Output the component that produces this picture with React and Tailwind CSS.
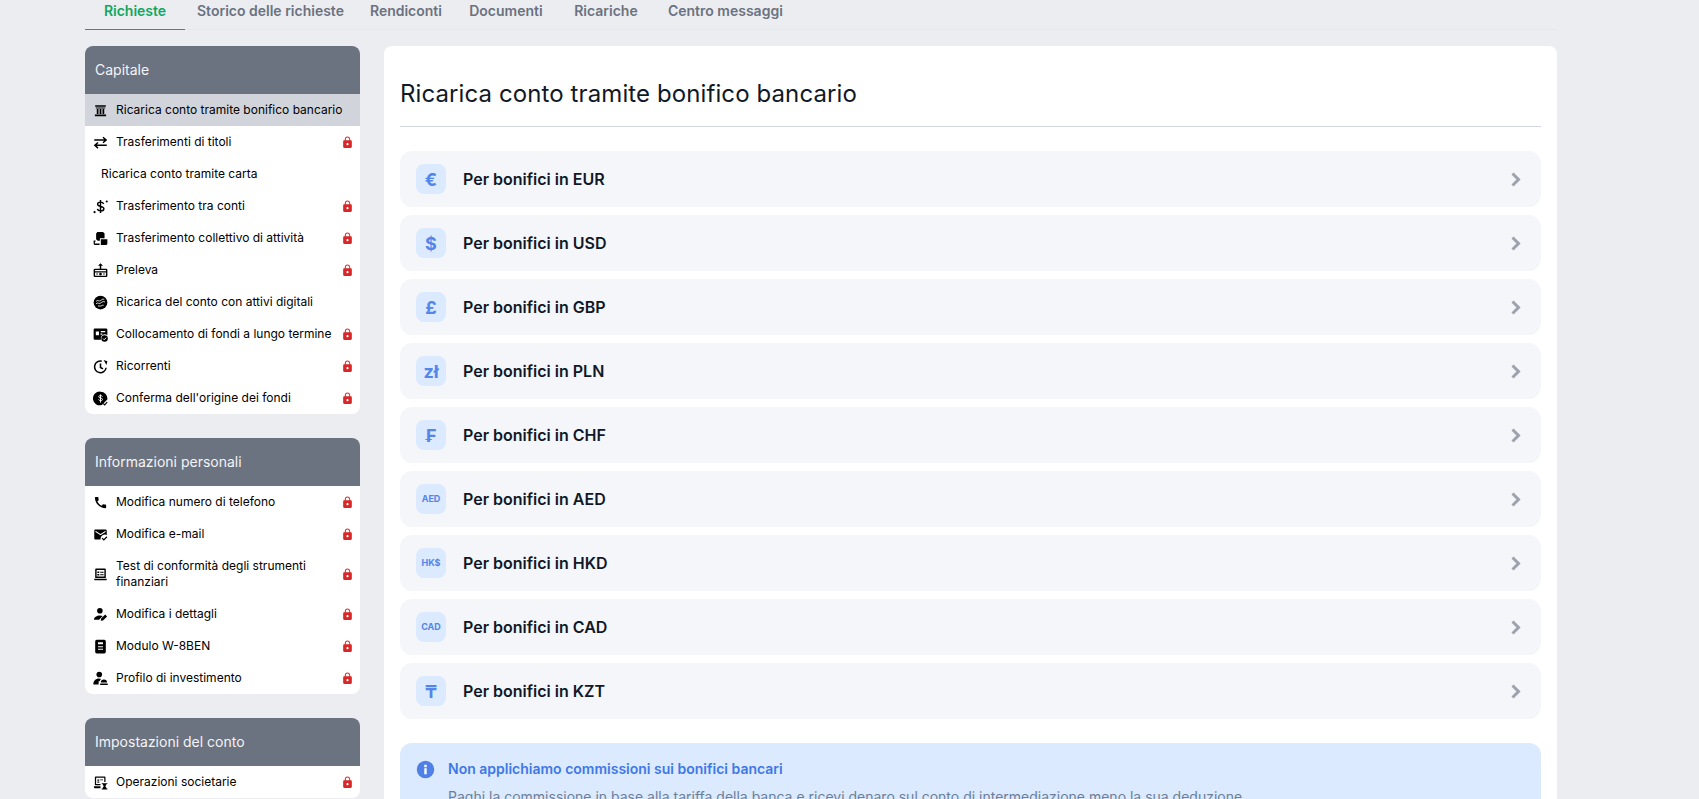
import React from "react";
import { MdCall, MdMarkEmailRead, MdLock } from "react-icons/md";

const S = ({ children }) => (
  <svg viewBox="0 0 24 24" width="15" height="15" fill="currentColor" className="shrink-0">{children}</svg>
);
const Bank = () => (
  <S><path d="M3.500 3.500h17V6h-17zM4.500 7h15v1.600h-15zM6 9.500h2.800v8H6zM10.600 9.500h2.800v8h-2.800zM15.200 9.500H18v8h-2.800zM3 18.500h18V21H3z" /></S>
);
const Swap = () => (
  <S><path d="M2 8h18M16 3.500 21 8l-5 4.500M22 16.500H4M8 12 3 16.500 8 21" fill="none" stroke="currentColor" strokeWidth="2.400" /></S>
);
const Dollar = () => (
  <S>
    <path d="M17 8c-.6-2-2.600-3-5-3-2.700 0-4.600 1.300-4.600 3.300 0 4.700 10 2.400 10 7.200 0 2.200-2.100 3.500-5 3.500-2.600 0-4.800-1.100-5.400-3.200M12 1.500v21" fill="none" stroke="currentColor" strokeWidth="2.300" />
    <circle cx="22" cy="4" r="1.700" /><circle cx="2.500" cy="21" r="1.700" />
  </S>
);
const Collect = () => (
  <S><path d="M7 1.500h9l2.500 2.500v7.500H11v4H7.500L5 13V4zM12.500 13H23v7a2.500 2.500 0 0 1-2.500 2.500h-8zM1 15h3v2H3v3h7.500v2.500H3.500a2.500 2.500 0 0 1-2.500-2.500z" /></S>
);
const Withdraw = () => (
  <S>
    <path d="M12 .5 16 4.500h-2.800V9H21a2 2 0 0 1 2 2v9.500a2 2 0 0 1-2 2H3a2 2 0 0 1-2-2V11a2 2 0 0 1 2-2h7.800V4.500H8zM3.300 11.300v1.700h17.400v-1.700zM3.300 15v5.200h17.400V15z" fillRule="evenodd" />
    <circle cx="12" cy="17.600" r="2.200" /><circle cx="6.500" cy="17.600" r="1.200" /><circle cx="17.500" cy="17.600" r="1.200" />
  </S>
);
const Digital = () => (
  <S>
    <circle cx="12" cy="12" r="11" />
    <path d="M5 10c3-3 4 1 7-1s3-3 6-2M5 14c3-3 4 1 7-1s4-3 7-2M8 18c2-1.500 3 .5 5-.500s2-1.500 4-1" fill="none" stroke="#fff" strokeWidth="1.400" />
  </S>
);
const LongTerm = () => (
  <S>
    <path d="M3 2.500h18a2 2 0 0 1 2 2v8.500a6.500 6.500 0 0 0-10 7.500H3a2 2 0 0 1-2-2v-14a2 2 0 0 1 2-2z" />
    <path d="M4.500 7h5v6h-5zM12.500 6.500h7v2h-7zM12 10.500h3v2h-3z" fill="#fff" />
    <circle cx="18.500" cy="18.500" r="5.200" />
    <path d="m16 18.500 2 2 3-3.500" fill="none" stroke="#fff" strokeWidth="1.500" />
  </S>
);
const Recurring = () => (
  <S>
    <path d="M21 14a9.300 9.300 0 1 1-7-10.500M12 7v6.500l4 2.300" fill="none" stroke="currentColor" strokeWidth="2.500" />
    <path d="m17 1.500 6 2-1.500 6z" />
  </S>
);
const Confirm = () => (
  <S>
    <path d="M12 1a11 11 0 0 1 10.900 12.500L15 21.500l-1 1A11 11 0 1 1 12 1z" />
    <path d="M15 9c-.4-1.300-1.600-1.800-3-1.800-1.600 0-2.800.7-2.800 2 0 2.900 6 1.300 6 4.200 0 1.300-1.300 2-3 2-1.500 0-2.800-.6-3.200-1.900M12 5.500v13" fill="none" stroke="#fff" strokeWidth="1.500" />
    <path d="m16.500 20 2.200 2.200 4-4.500" fill="none" stroke="currentColor" strokeWidth="1.800" />
  </S>
);
const Phone = () => <MdCall size={15} className="shrink-0" />;
const Mail = () => <MdMarkEmailRead size={15} className="shrink-0" />;
const Test = () => (
  <S>
    <path d="M5 2.500h14A1.500 1.500 0 0 1 20.500 4v13.500h-17V4A1.500 1.500 0 0 1 5 2.500zM5.800 4.800v10.400h12.400V4.800zM2 18.800h20v1a1.500 1.500 0 0 1-1.500 1.500h-17A1.500 1.500 0 0 1 2 19.800z" fillRule="evenodd" />
    <path d="M7 7h3v2.500H7zM7 11h3v2.500H7zM11.500 7.500h5.500V9h-5.500zM11.500 11.500h5.500V13h-5.500z" />
  </S>
);
const PersonEdit = () => (
  <S>
    <circle cx="11" cy="6" r="4.500" />
    <path d="M1.500 20.500c0-4.500 4.500-7 9.500-7 1.500 0 3.200.3 4.500.8L9.700 20.500zM12.500 22l.5-3.500 6.500-6.500 3 3-6.500 6.500z" />
  </S>
);
const Doc = () => (
  <S>
    <path d="M6 1h12a2.500 2.500 0 0 1 2.500 2.500v17A2.500 2.500 0 0 1 18 23H6a2.500 2.500 0 0 1-2.500-2.500v-17A2.500 2.500 0 0 1 6 1z" />
    <path d="M8 5h8v3.500H8zM8 11.500h8V13H8zM8 15.500h8V17H8z" fill="#fff" />
  </S>
);
const Profile = () => (
  <S>
    <circle cx="10" cy="5.500" r="4.500" />
    <path d="M.5 21.500c0-5.500 3.500-9.500 9-9.500 1.300 0 2.400.3 3.500.8-1.200.9-2 2.200-2.400 3.700H9v5zM11.500 22.500h12v-2.500h-12zM12.500 18.500h10a5 5 0 0 0-10 0z" />
  </S>
);
const Corp = () => (
  <S>
    <path d="M4.500 2.500h14A1.500 1.500 0 0 1 20 4v7h-2V4.500H5v10h7v2H3V4a1.500 1.500 0 0 1 1.500-1.500zM1.500 18H12v3H3a1.500 1.500 0 0 1-1.500-1.500z" fillRule="evenodd" />
    <path d="M7 7h3v2H7zM7 10.500h3v2H7zM11.500 7H16v1.500h-4.500z" />
    <path d="M14 13h9v1.500h-1.500c0 2-1 2.500-2 3.500 1 1 2 1.500 2 3.500H23V23h-9v-1.500h1.500c0-2 1-2.500 2-3.500-1-1-2-1.500-2-3.500H14z" />
  </S>
);

const Lock = () => <MdLock size={13} className="text-[#dc2626] shrink-0" />;

const groups = [
  {
    title: "Capitale",
    items: [
      { t: "Ricarica conto tramite bonifico bancario", I: Bank, active: true },
      { t: "Trasferimenti di titoli", I: Swap, lock: true },
      { t: "Ricarica conto tramite carta" },
      { t: "Trasferimento tra conti", I: Dollar, lock: true },
      { t: "Trasferimento collettivo di attività", I: Collect, lock: true },
      { t: "Preleva", I: Withdraw, lock: true },
      { t: "Ricarica del conto con attivi digitali", I: Digital },
      { t: "Collocamento di fondi a lungo termine", I: LongTerm, lock: true },
      { t: "Ricorrenti", I: Recurring, lock: true },
      { t: "Conferma dell'origine dei fondi", I: Confirm, lock: true },
    ],
  },
  {
    title: "Informazioni personali",
    items: [
      { t: "Modifica numero di telefono", I: Phone, lock: true },
      { t: "Modifica e-mail", I: Mail, lock: true },
      { t: "Test di conformità degli strumenti finanziari", I: Test, lock: true },
      { t: "Modifica i dettagli", I: PersonEdit, lock: true },
      { t: "Modulo W-8BEN", I: Doc, lock: true },
      { t: "Profilo di investimento", I: Profile, lock: true },
    ],
  },
  {
    title: "Impostazioni del conto",
    items: [{ t: "Operazioni societarie", I: Corp, lock: true }],
  },
];

const currencies = [
  ["€", "EUR", "text-[18px]"],
  ["$", "USD", "text-[18px]"],
  ["£", "GBP", "text-[18px]"],
  ["zł", "PLN", "text-[18px]"],
  ["₣", "CHF", "text-[18px]"],
  ["AED", "AED", "text-[9px]"],
  ["HK$", "HKD", "text-[9px]"],
  ["CAD", "CAD", "text-[9px]"],
  ["₸", "KZT", "text-[18px]"],
];

const tabs = ["Richieste", "Storico delle richieste", "Rendiconti", "Documenti", "Ricariche", "Centro messaggi"];

export default function App() {
  return (
    <div className="h-screen overflow-hidden bg-[#ebedf1] pl-[85px] font-['Inter',sans-serif] text-[#111827]">
      <div className="w-[1472px]">
        <div className="flex h-[30px] border-b border-[#e5e7eb]">
          {tabs.map((t, i) => (
            <div
              key={t}
              className={`h-[30px] min-w-[100px] px-3 pt-[1px] text-center text-[14px] leading-5 font-semibold ${
                i === 0 ? "border-b border-[#10a85f] text-[#10a85f]" : "text-[#6b7280]"
              }`}
            >
              {t}
            </div>
          ))}
        </div>
        <div className="mt-4 flex items-start gap-6">
          <aside className="flex w-[275px] shrink-0 flex-col gap-6">
            {groups.map((g) => (
              <div key={g.title} className="overflow-hidden rounded-lg bg-white">
                <div className="flex h-12 items-center bg-[#6b7280] px-[10px] pb-[2px] text-[14px] text-[#f3f4f6]">{g.title}</div>
                {g.items.map((it) => (
                  <div
                    key={it.t}
                    className={`flex min-h-8 items-center py-2 pr-[6px] text-[12px] leading-4 text-black ${
                      it.I ? "pl-[8px]" : "pl-4"
                    } ${it.active ? "bg-[#d1d5db]" : ""}`}
                  >
                    {it.I && <span className="mr-[8px] flex shrink-0"><it.I /></span>}
                    <span className="flex-1">{it.t}</span>
                    {it.lock && <Lock />}
                  </div>
                ))}
              </div>
            ))}
          </aside>
          <main className="min-w-0 flex-1 rounded-lg bg-white px-4 pt-[32px]">
            <div className="border-b border-[#d1d5db] pb-[16px] text-[24px] leading-8 tracking-[0.1px]">Ricarica conto tramite bonifico bancario</div>
            <div className="mt-6 flex flex-col gap-2">
              {currencies.map(([sym, code, size]) => (
                <div key={code} className="flex h-14 items-center rounded-xl bg-[#f5f6fa] pr-5 pl-4">
                  <div className={`flex h-[30px] w-[30px] items-center justify-center rounded-lg bg-[#dbeafe] font-bold text-[#5585e8] ${size}`}>{sym}</div>
                  <div className="ml-[17px] flex-1 text-[16px] font-semibold">Per bonifici in {code}</div>
                  <svg width="10" height="15" viewBox="0 0 10 15" fill="none" stroke="#9ca3af" strokeWidth="3">
                    <path d="m1.500 1.500 6 6-6 6" />
                  </svg>
                </div>
              ))}
            </div>
            <div className="mt-6 rounded-xl bg-[#dbeafe] p-4">
              <div className="flex items-center gap-[13px]">
                <svg width="19" height="19" viewBox="0 0 24 24" className="shrink-0">
                  <circle cx="12" cy="12" r="11" fill="#4f80e8" />
                  <path d="M10.500 10.500h3V18h-3zM10.500 6h3v3h-3z" fill="#fff" />
                </svg>
                <div className="text-[14px] leading-5 font-semibold text-[#3f78e6]">Non applichiamo commissioni sui bonifici bancari</div>
              </div>
              <div className="mt-[8px] pl-[32px] text-[14px] leading-5 text-[#6b7f9a]">
                Paghi la commissione in base alla tariffa della banca e ricevi denaro sul conto di intermediazione meno la sua deduzione.
              </div>
            </div>
          </main>
        </div>
      </div>
    </div>
  );
}
